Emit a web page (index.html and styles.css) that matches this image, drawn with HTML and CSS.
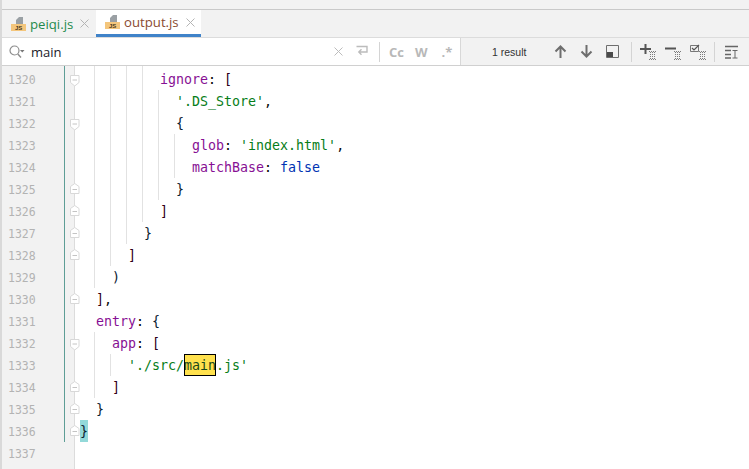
FILE: index.html
```html
<!DOCTYPE html>
<html lang="en">
<head>
    <meta charset="UTF-8">
    <title>output.js</title>
    <link rel="stylesheet" href="styles.css">
</head>
<body>
    <svg class="defs" width="0" height="0">
        <symbol id="fold-open" viewBox="0 0 10 14">
            <path d="M.5 2.500h8.500v7l-4.250 3.500-4.250-3.500z" fill="#fff" stroke="#d8d8d8"/>
            <path d="M2.500 7h4.500" stroke="#c4c4c4"/>
        </symbol>
        <symbol id="fold-close" viewBox="0 0 10 14">
            <path d="M.5 10.500h8.500v-7l-4.250-3-4.250 3z" fill="#fff" stroke="#d8d8d8"/>
            <path d="M2.500 6.500h4.500" stroke="#c4c4c4"/>
        </symbol>
        <symbol id="ticks" viewBox="0 0 7 9">
            <path d="M0 .5h7M0 8.500h7M1.500 1v7M3.500 1v7M5.500 1v7" stroke="#7c7c7c" stroke-dasharray="1 1" fill="none"/>
        </symbol>
    </svg>

    <div class="top-strip"></div>

    <div class="tabs">
        <div class="tab">
            <svg class="tab-icon" viewBox="0 0 16 16">
                <path d="M8 1h4v7H5V4z" fill="#9aa0a4"/>
                <path d="M0 8h15v7H0z" fill="#f4c67c"/>
                <text x="4" y="14" class="js-label">JS</text>
            </svg>
            <span class="tab-name added">peiqi.js</span>
            <svg class="tab-close" viewBox="0 0 9 9"><path d="M.5.500l8 8M8.500.500l-8 8"/></svg>
        </div>
        <div class="tab active">
            <svg class="tab-icon" viewBox="0 0 16 16">
                <path d="M8 1h4v7H5V4z" fill="#9aa0a4"/>
                <path d="M0 8h15v7H0z" fill="#f4c67c"/>
                <text x="4" y="14" class="js-label">JS</text>
            </svg>
            <span class="tab-name modified">output.js</span>
            <svg class="tab-close" viewBox="0 0 9 9"><path d="M.5.500l8 8M8.500.500l-8 8"/></svg>
        </div>
    </div>

    <div class="search-bar">
        <div class="search-field">
            <svg class="search-icon" viewBox="0 0 16 14">
                <circle cx="5.500" cy="5.500" r="4.500" fill="none" stroke="#8c8c8c" stroke-width="1.200"/>
                <path d="M8.800 9l3.200 3.500" stroke="#8c8c8c" stroke-width="1.400"/>
                <path d="M11 5h4.500l-2.250 2.500z" fill="#777"/>
            </svg>
            <span class="search-text">main</span>
            <svg class="opt-close" viewBox="0 0 9 9"><path d="M.5.500l8 8M8.500.500l-8 8"/></svg>
            <svg class="opt-wrap" viewBox="0 0 14 13"><path d="M1.500 1.500h10.500v5.500H4M6.500 4.200L3.800 7l2.700 2.800" fill="none" stroke="#bcbcbc" stroke-width="1.400"/></svg>
            <span class="sep"></span>
            <span class="opt cc">Cc</span>
            <span class="opt w">W</span>
            <span class="opt regex">.*</span>
        </div>
        <div class="search-side">
            <span class="result-count">1 result</span>
            <svg class="tool first-tool" viewBox="0 0 13 13"><path d="M6.500 13V2M1.500 6.500l5-5 5 5" fill="none" stroke="#6e6e6e" stroke-width="2"/></svg>
            <svg class="tool" viewBox="0 0 13 13"><path d="M6.500 0v11M1.500 6.500l5 5 5-5" fill="none" stroke="#6e6e6e" stroke-width="2"/></svg>
            <svg class="tool" viewBox="0 0 13 13"><path d="M.5.500h12v12H.5z" fill="none" stroke="#6e6e6e"/><path d="M1 7h6v5H1z" fill="#4a4a4a"/></svg>
            <span class="sep"></span>
            <span class="tool-wide">
                <svg viewBox="0 0 16 16"><path d="M5.500 0v10M0 5h11" stroke="#555" stroke-width="2"/><use href="#ticks" x="9" y="7" width="7" height="9"/></svg>
            </span>
            <span class="tool-wide">
                <svg viewBox="0 0 16 16"><path d="M0 4.500h11" stroke="#555" stroke-width="2"/><use href="#ticks" x="9" y="7" width="7" height="9"/></svg>
            </span>
            <span class="tool-wide">
                <svg viewBox="0 0 16 16"><path d="M.5 1.500h8v6h-8z" fill="none" stroke="#777"/><path d="M2 4l2 2 5-5" fill="none" stroke="#555" stroke-width="1.200"/><use href="#ticks" x="9" y="7" width="7" height="9"/></svg>
            </span>
            <span class="sep"></span>
            <svg class="tool-last" viewBox="0 0 14 14"><path d="M0 1.500h13M0 5.500h6M0 9.500h6M0 13h6" stroke="#666" stroke-width="1.400"/><path d="M7.500 5.500h5M10 5.500v7.500M7.500 13h5" stroke="#666" fill="none"/></svg>
        </div>
    </div>

    <div class="editor">
        <div class="line lead"><span class="num"></span><span class="code"><i class="pad"></i><i class="g"></i><i class="g"></i><i class="g"></i><i class="g"></i></span></div>

        <div class="line"><span class="num">1320</span><svg class="fold"><use href="#fold-open"/></svg><span class="code"><i class="pad"></i><i class="g"></i><i class="g"></i><i class="g"></i><i class="g"></i><span class="t"><b class="k">ignore</b>: <b class="b">[</b></span></span></div>
        <div class="line"><span class="num">1321</span><span class="code"><i class="pad"></i><i class="g"></i><i class="g"></i><i class="g"></i><i class="g"></i><i class="g"></i><span class="t"><b class="st">'.DS_Store'</b>,</span></span></div>
        <div class="line"><span class="num">1322</span><svg class="fold"><use href="#fold-open"/></svg><span class="code"><i class="pad"></i><i class="g"></i><i class="g"></i><i class="g"></i><i class="g"></i><i class="g"></i><span class="t"><b class="c">{</b></span></span></div>
        <div class="line"><span class="num">1323</span><span class="code"><i class="pad"></i><i class="g"></i><i class="g"></i><i class="g"></i><i class="g"></i><i class="g"></i><i class="g"></i><span class="t"><b class="k">glob</b>: <b class="st">'index.html'</b>,</span></span></div>
        <div class="line"><span class="num">1324</span><span class="code"><i class="pad"></i><i class="g"></i><i class="g"></i><i class="g"></i><i class="g"></i><i class="g"></i><i class="g"></i><span class="t"><b class="k">matchBase</b>: <b class="kw">false</b></span></span></div>
        <div class="line"><span class="num">1325</span><svg class="fold"><use href="#fold-close"/></svg><span class="code"><i class="pad"></i><i class="g"></i><i class="g"></i><i class="g"></i><i class="g"></i><i class="g"></i><span class="t"><b class="c">}</b></span></span></div>
        <div class="line"><span class="num">1326</span><svg class="fold"><use href="#fold-close"/></svg><span class="code"><i class="pad"></i><i class="g"></i><i class="g"></i><i class="g"></i><i class="g"></i><span class="t"><b class="b">]</b></span></span></div>
        <div class="line"><span class="num">1327</span><svg class="fold"><use href="#fold-close"/></svg><span class="code"><i class="pad"></i><i class="g"></i><i class="g"></i><i class="g"></i><span class="t"><b class="c">}</b></span></span></div>
        <div class="line"><span class="num">1328</span><svg class="fold"><use href="#fold-close"/></svg><span class="code"><i class="pad"></i><i class="g"></i><i class="g"></i><span class="t"><b class="b">]</b></span></span></div>
        <div class="line"><span class="num">1329</span><span class="code"><i class="pad"></i><i class="g"></i><span class="t"><b class="c">)</b></span></span></div>
        <div class="line"><span class="num">1330</span><svg class="fold"><use href="#fold-close"/></svg><span class="code"><i class="pad"></i><span class="t"><b class="b">]</b>,</span></span></div>
        <div class="line"><span class="num">1331</span><span class="code"><i class="pad"></i><span class="t"><b class="k">entry</b>: <b class="c">{</b></span></span></div>
        <div class="line"><span class="num">1332</span><svg class="fold"><use href="#fold-open"/></svg><span class="code"><i class="pad"></i><i class="g"></i><span class="t"><b class="k">app</b>: <b class="b">[</b></span></span></div>
        <div class="line"><span class="num">1333</span><span class="code"><i class="pad"></i><i class="g"></i><i class="g"></i><span class="t"><b class="st">'./src/<mark class="hit">main</mark>.js'</b></span></span></div>
        <div class="line"><span class="num">1334</span><svg class="fold"><use href="#fold-close"/></svg><span class="code"><i class="pad"></i><i class="g"></i><span class="t"><b class="b">]</b></span></span></div>
        <div class="line"><span class="num">1335</span><svg class="fold"><use href="#fold-close"/></svg><span class="code"><i class="pad"></i><span class="t"><b class="c">}</b></span></span></div>
        <div class="line"><span class="num">1336</span><svg class="fold"><use href="#fold-close"/></svg><span class="code"><span class="t"><b class="c match">}</b></span></span></div>
        <div class="line last"><span class="num">1337</span><span class="code"></span></div>
    </div>
</body>
</html>
```

FILE: styles.css
```css
* {
    box-sizing: border-box;
}
html, body {
    margin: 0;
    height: 100%;
    overflow: hidden;
}
body {
    background: #fff;
    font-family: "Open Sans", "Noto Sans", sans-serif;
    border-left: 2px solid #d9d9d9;
}
.defs {
    position: absolute;
}
.js-label {
    font-family: "Liberation Sans", sans-serif;
    font-size: 6px;
    font-weight: 700;
    fill: #4a3a20;
}
.top-strip {
    height: 10px;
    background: #f2f2f2;
    border-bottom: 1px solid #c9c9c9;
}

/* tabs */
.tabs {
    display: flex;
    height: 27px;
    background: #f2f2f2;
}
.tab {
    display: flex;
    align-items: center;
    width: 94px;
    padding-left: 9px;
}
.tab.active {
    width: 105px;
    background: #fff;
    border-bottom: 3px solid #4083c9;
}
.tab-icon {
    width: 16px;
    height: 16px;
    overflow: visible;
}
.tab-name {
    margin-left: 3px;
    font-size: 13.200px;
}
.added {
    color: #1f8a4c;
}
.modified {
    color: #8a4a2f;
}
.tab-close {
    width: 9px;
    height: 9px;
    margin-left: 7px;
    fill: none;
    stroke: #b4b4b4;
}

/* search row */
.search-bar {
    display: flex;
    height: 29px;
    border-top: 1px solid #dcdcdc;
    border-bottom: 1px solid #d0d0d0;
}
.search-field {
    display: flex;
    align-items: center;
    width: 459px;
    padding-left: 7px;
    border-right: 1px solid #d8d8d8;
}
.search-icon {
    width: 16px;
    height: 14px;
}
.search-text {
    width: 303px;
    margin-left: 6px;
    font-size: 13px;
    color: #1a1a2a;
}
.opt-close {
    width: 9px;
    height: 9px;
    fill: none;
    stroke: #bcbcbc;
}
.opt-wrap {
    width: 14px;
    height: 13px;
    margin-left: 12px;
}
.sep {
    width: 1px;
    height: 20px;
    background: #d4d4d4;
}
.search-field .sep {
    margin: 0 9px 0 10px;
}
.opt {
    font-size: 13px;
    font-weight: 700;
    color: #b8b8b8;
}
.w {
    margin-left: 11px;
}
.regex {
    margin-left: 14px;
}
.search-side {
    display: flex;
    flex: 1;
    align-items: center;
    background: #f2f2f2;
}
.result-count {
    width: 62px;
    margin-left: 31px;
    font-family: "Liberation Sans", sans-serif;
    font-size: 10.500px;
    color: #333;
}
.tool {
    width: 13px;
    height: 13px;
    margin-right: 13px;
}
.search-side .sep {
    margin: 0 8px 0 -1px;
}
.tool-wide {
    display: flex;
    width: 16px;
    height: 16px;
    margin-right: 9px;
}
.tool-last {
    width: 14px;
    height: 14px;
    margin-left: 2px;
}

/* editor */
.line {
    position: relative;
    display: flex;
    height: 22px;
}
.lead {
    height: 2px;
}
.last {
    height: 40px;
}
.last .num {
    border-right-color: transparent;
}
.num {
    flex: none;
    width: 63px;
    padding: 1px 0 0 6px;
    background: #f2f2f2;
    border-right: 1px solid #5e9e96;
    font-family: "DejaVu Sans Mono", monospace;
    font-size: 11.500px;
    line-height: 22px;
    color: #b3b3b3;
}
.code {
    display: flex;
    flex: 1;
    padding-left: 4px;
    font-family: "DejaVu Sans Mono", monospace;
    font-size: 13.300px;
    line-height: 22px;
    color: #080808;
    white-space: pre;
    border-left: 9px solid #f2f2f2;
    box-shadow: inset 1px 0 #dcdcdc;
}
.fold {
    position: absolute;
    left: 68px;
    top: 5px;
    width: 10px;
    height: 14px;
    z-index: 1;
}
.pad {
    flex: none;
    width: 16px;
}
.g {
    flex: none;
    width: 16px;
    border-left: 1px solid #e2e2e2;
}
.t {
    padding: 1px 0 0 2px;
}
.t b {
    font-weight: 400;
}
.k {
    color: #871094;
}
.st {
    color: #067d17;
}
.kw {
    color: #0033b3;
}
.b {
    color: #300018;
}
.c {
    color: #0a2030;
}
.match {
    display: inline-block;
    height: 22px;
    margin-top: -1px;
    padding-top: 1px;
    background: #93d9d9;
}
.hit {
    display: inline-block;
    height: 22px;
    margin-top: -1px;
    padding-top: 1px;
    background: #ffe14d;
    color: #1a4a1a;
    outline: 1px solid #000;
    outline-offset: -1px;
}
```
